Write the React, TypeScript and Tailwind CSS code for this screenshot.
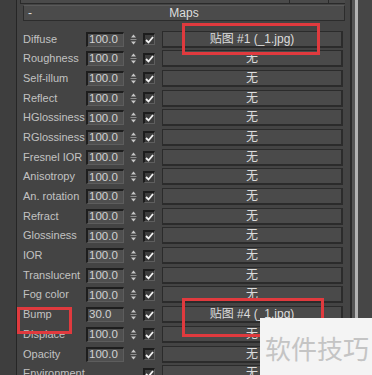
import React from "react";

type Row = { label: string; value?: string; map: string };

const rows: Row[] = [
  { label: "Diffuse", value: "100.0", map: "贴图 #1 (_1.jpg)" },
  { label: "Roughness", value: "100.0", map: "无" },
  { label: "Self-illum", value: "100.0", map: "无" },
  { label: "Reflect", value: "100.0", map: "无" },
  { label: "HGlossiness", value: "100.0", map: "无" },
  { label: "RGlossiness", value: "100.0", map: "无" },
  { label: "Fresnel IOR", value: "100.0", map: "无" },
  { label: "Anisotropy", value: "100.0", map: "无" },
  { label: "An. rotation", value: "100.0", map: "无" },
  { label: "Refract", value: "100.0", map: "无" },
  { label: "Glossiness", value: "100.0", map: "无" },
  { label: "IOR", value: "100.0", map: "无" },
  { label: "Translucent", value: "100.0", map: "无" },
  { label: "Fog color", value: "100.0", map: "无" },
  { label: "Bump", value: "30.0", map: "贴图 #4 (_1.jpg)" },
  { label: "Displace", value: "100.0", map: "无" },
  { label: "Opacity", value: "100.0", map: "无" },
  { label: "Environment", map: "无" },
];

function Spinner() {
  return (
    <svg width="9" height="15" viewBox="0 0 9 15" className="ml-[5px] shrink-0">
      <path d="M4.5 2.5 L7 5.5 L2 5.5 Z" fill="#c8c8c8" />
      <line x1="1.5" y1="7.5" x2="7.5" y2="7.5" stroke="#8e8e8e" strokeWidth="1" />
      <path d="M2 9.5 L7 9.5 L4.5 12.5 Z" fill="#c8c8c8" />
    </svg>
  );
}

function Check() {
  return (
    <div className="ml-[5px] w-[12px] h-[12px] shrink-0 bg-[#3c3c3c] border-t-2 border-l-2 border-[#1c1c1c] border-b border-r border-b-[#5e5e5e] border-r-[#5e5e5e] flex items-center justify-center">
      <svg width="9" height="8" viewBox="0 0 9 8">
        <path d="M1 4 L3.5 6.5 L8 1" fill="none" stroke="#f2f2f2" strokeWidth="1.8" />
      </svg>
    </div>
  );
}

export default function App() {
  return (
    <div className="relative w-[372px] h-[375px] overflow-hidden bg-[#444444] flex font-['Liberation_Sans','Noto_Sans_CJK_SC',sans-serif]">
      <div className="w-[16px] shrink-0 bg-[#3e3e3e]" />
      <div className="w-[1px] shrink-0 bg-[#262626]" />
      <div className="w-[333px] shrink-0 flex flex-col pl-[6px] pr-[5px]">
        <div className="h-[4px] shrink-0 -ml-[3px] bg-[#4a4a4a] border-l border-b border-[#2a2a2a] flex justify-end">
          <div className="w-[1px] h-full bg-[#2a2a2a] mr-[38px]" />
          <div className="w-[1px] h-full bg-[#2a2a2a] mr-[16px]" />
        </div>
        <div className="mt-[1px] h-[16px] shrink-0 bg-[#4b4b4b] border border-[#2c2c2c] border-t-[#5a5a5a] grid grid-cols-[20px_1fr_20px] items-center text-[12px] text-[#dedede] leading-none">
          <span className="pl-[4px] text-[12px]">-</span>
          <span className="text-center">Maps</span>
          <span />
        </div>
        <div className="mt-[8.2px] shrink-0 flex flex-col pr-[2px]">
          {rows.map((r) => (
            <div key={r.label} className="h-[19.7px] shrink-0 flex items-center">
              <div className="w-[63px] shrink-0 text-[11px] leading-none text-[#c2c2c2] whitespace-nowrap">
                {r.label}
              </div>
              {r.value ? (
                <>
                  <div className="w-[38px] h-[15px] shrink-0 bg-[#4f4f4f] border-t-2 border-l-2 border-[#1e1e1e] border-b border-r border-b-[#5d5d5d] border-r-[#5d5d5d] pl-[1px] flex items-center text-[11.5px] leading-none text-[#d2d2d2]">
                    {r.value}
                  </div>
                  <Spinner />
                </>
              ) : (
                <div className="w-[52px] shrink-0" />
              )}
              <Check />
              <div className="ml-[7px] flex-1 h-[17px] bg-[#4a4a4a] border border-[#2b2b2b] border-r-2 border-b-2 flex items-center justify-center text-[12px] leading-none text-[#dcdcdc] whitespace-nowrap">
                {r.map}
              </div>
            </div>
          ))}
        </div>
      </div>
      <div className="w-[2px] shrink-0 bg-[#2a2a2a]" />
      <div className="w-[3px] shrink-0 bg-[#555555]" />
      <div className="w-[3px] shrink-0 bg-[#b3b3b3]" />
      <div className="flex-1 bg-[#464646]" />

      <div className="absolute left-[182px] top-[23px] w-[138px] h-[32px] border-[3px] border-[#e03a3e]" />
      <div className="absolute left-[17px] top-[307px] w-[55px] h-[27px] border-[3px] border-[#e03a3e]" />
      <div className="absolute left-[182px] top-[298px] w-[142px] h-[39px] border-[3px] border-[#e03a3e]" />

      <div className="absolute left-[260px] top-[318px] right-0 bottom-0 bg-[#f4f4f4] flex items-center pl-[5px] pt-[2px] text-[26px] leading-none text-[#c4c4c4] font-['Noto_Sans_CJK_SC',sans-serif] whitespace-nowrap">
        软件技巧
      </div>
    </div>
  );
}
